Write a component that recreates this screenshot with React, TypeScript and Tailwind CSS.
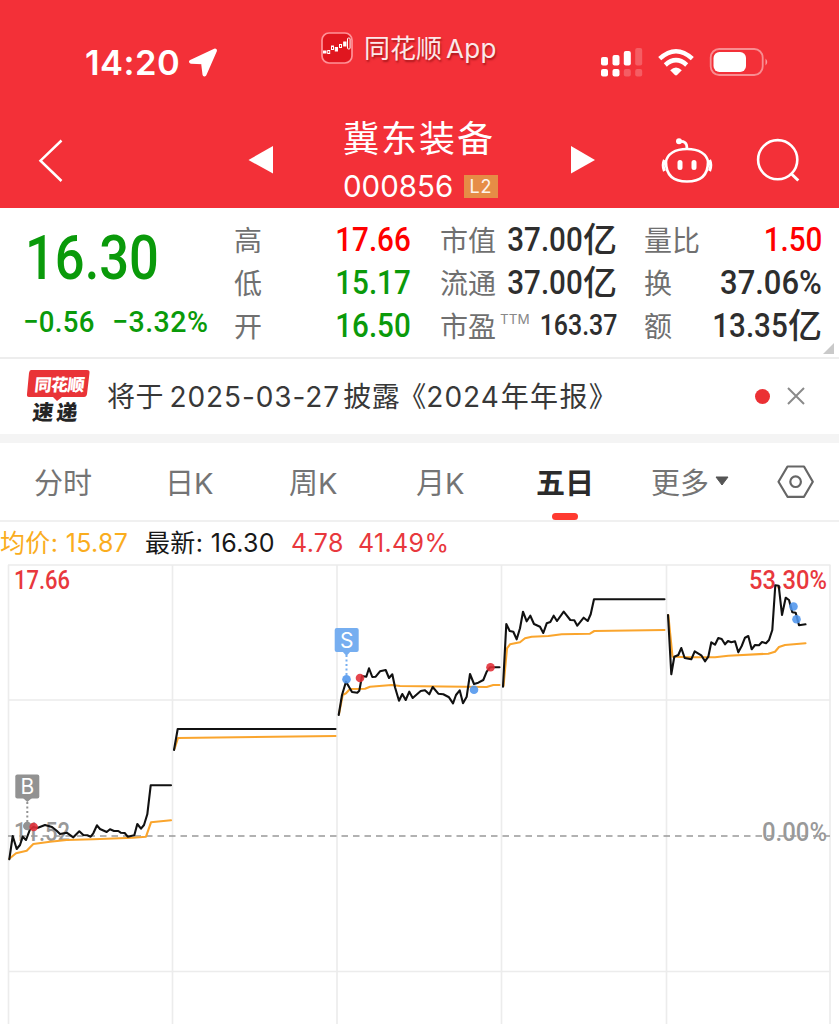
import React from 'react';

const sans = "font-['Inter','Noto_Sans_CJK_SC',sans-serif]";
const din = "font-['Roboto','Noto_Sans_CJK_SC',sans-serif] font-medium";

const quoteColumns = [
  {
    width: 'w-[177px]',
    margin: '',
    rows: [
      { label: '高', value: '17.66', unit: '', color: 'text-[#ff0000]' },
      { label: '低', value: '15.17', unit: '', color: 'text-[#0a9a0a]' },
      { label: '开', value: '16.50', unit: '', color: 'text-[#0a9a0a]' }
    ]
  },
  {
    width: 'w-[177px]',
    margin: 'ml-[29px]',
    rows: [
      { label: '市值', value: '37.00', unit: '亿', color: 'text-[#2e2e2e]' },
      { label: '流通', value: '37.00', unit: '亿', color: 'text-[#2e2e2e]' },
      { label: '市盈', value: '163.37', unit: '', color: 'text-[#2e2e2e]', sup: 'TTM' }
    ]
  },
  {
    width: 'w-[178px]',
    margin: 'ml-[27px]',
    rows: [
      { label: '量比', value: '1.50', unit: '', color: 'text-[#ff0000]' },
      { label: '换', value: '37.06%', unit: '', color: 'text-[#2e2e2e]', wide: true },
      { label: '额', value: '13.35', unit: '亿', color: 'text-[#2e2e2e]' }
    ]
  }
];

const tabs = [
  { label: '分时', margin: 'ml-[34px]', width: 'w-[60px]' },
  { label: '日K', margin: 'ml-[71px]', width: 'w-[50px]' },
  { label: '周K', margin: 'ml-[74px]', width: 'w-[50px]' },
  { label: '月K', margin: 'ml-[77px]', width: 'w-[50px]' },
  { label: '五日', margin: 'ml-[70px]', width: 'w-[58px]', active: true },
  { label: '更多', margin: 'ml-[57px]', width: 'w-[60px]' }
];

const priceLines = [
  '9.3,859.3 12.7,836 16.7,849 20,845 22.7,836.7 26,840 30,829.3 33.3,827 37.3,828 45,825 52,827 56.7,830.7 60,834 66.7,832.7 73.3,837.3 79.3,831.3 83.3,835 87.3,835.3 90.7,836.7 93.3,833.3 97,825.3 100,829 106.7,832 110,829.3 114,831 118.3,831 120.7,832.7 124.7,833 127.7,836.7 134.3,835.3 137.3,824 141,828.7 144,825 147.3,814.3 150.7,785.3 171,785.3',
  '174,750 177.7,729 335.5,729',
  '338.7,715 342,695 346,681.7 352,692 357.3,692.7 359.3,690.7 362,676 366.3,676.7 369,668.3 372.3,677 375.7,676.7 380,671.3 385.7,670 389,678 392.3,674.3 395,687.3 399,700.7 402.3,694 405.7,700 409.3,691.7 412.7,698 420.7,691 425,690.3 429.3,694.3 432.7,687 438.3,693.7 443.3,694.3 449,697.3 453,703.3 456,695 459.7,690.3 463,703.3 466.7,696.7 470,674 474,684 478.3,682.7 483.3,680 486.7,671.7 490,667.3 499.5,667.3',
  '503,686.7 506.3,624 509.7,631 513.3,631.7 516.7,639.3 520,628.3 523,611.7 526.7,621.3 530.3,615.7 534,624 540,626.7 543.3,633 546.7,623.3 550.3,622 553.7,615.7 557,621 563.7,611.7 570.3,620 574.3,620.3 577.3,625.7 583.7,617.7 587.7,621 590.7,614.3 594,599.3 664.5,599.3',
  '668,615 671.3,674.3 674.3,656.7 678.3,655 681.3,648 684.7,658 691.3,659.3 694.7,651.3 701.3,655.3 705,661.3 708.3,656.7 711.3,642.3 715,644.7 718.3,638 721.7,639 725,644.3 728,641 731.3,642.3 735,641.3 738.3,652.3 741.7,646 745,637.7 748.3,636 751.7,649.3 755,645 759,645.3 762,642 766,643.3 769,640 772.3,630 775.3,585.3 778.7,585.7 782,615 785.7,597.7 789,600 792.3,612.3 795.7,612.7 799,625.3 805.5,624.3'
];

const averageLines = [
  '9.3,858.7 16,853.3 26.7,850.7 33.3,844 50,841.7 66.7,840 93.3,839.3 133,837.7 146,836.7 151,822.3 171,820.3',
  '174.5,749 178,738 335.5,736',
  '339,714 342.7,695 346,693.3 350,689 365,688.7 370,686.7 391.7,685 400,686 486.7,687 493.3,685 499.5,685',
  '503.5,686 507,648.3 510,644.3 520,642.3 525,638.3 531.7,636.7 548.3,636 561.7,634.3 590,633.7 594.3,631 664.5,630',
  '668.3,615 672.5,656.7 675,656.7 688.3,657.3 715,657.3 728.3,655.7 768.3,653.7 775,651.7 779,647 785,645 805.5,643.3'
];

const StatusBar: React.FC = () => (
  <div className="flex h-[97px] items-start text-white">
    <div className="ml-[85px] mt-[42px] flex items-center">
      <span className="w-[97px] whitespace-nowrap text-[34.5px] font-semibold leading-[42px] tracking-[0.5px]">14:20</span>
      <svg className="ml-[6px]" width="30" height="30" viewBox="0 0 30 30">
        <path d="M27 2.500 3 13.700 15 14.300 16.500 26.500Z" fill="white" stroke="white" strokeWidth="4" strokeLinejoin="round" />
      </svg>
    </div>
    <div className="ml-[103px] mt-[32px] flex h-8 items-center">
      <svg width="32" height="32" viewBox="0 0 32 32">
        <rect x="1" y="1" width="30" height="30" rx="7" fill="#e0161f" stroke="#ff9298" strokeWidth="1.7" />
        <g fill="white" stroke="white" strokeWidth="1">
          <rect x="2.5" y="19" width="2.5" height="2" />
          <rect x="6.7" y="18.5" width="2" height="3" fill="none" />
          <rect x="10.5" y="14" width="2" height="3.5" fill="none" />
          <rect x="14.3" y="15.5" width="2.2" height="3.5" />
          <rect x="18.5" y="12.5" width="2" height="3" fill="none" />
          <rect x="22.7" y="10" width="2.3" height="4" />
          <rect x="26.5" y="6" width="2.6" height="11" rx="1" fill="none" />
        </g>
      </svg>
      <span className="relative top-px ml-[11px] w-[133px] whitespace-nowrap text-[26px] leading-8 text-white/90 [text-shadow:1px_2px_2px_rgba(100,0,0,0.5)]">
        同花顺<span className="ml-[4px] tracking-[0.3px]">App</span>
      </span>
    </div>
    <svg className="ml-[100px] mt-[42px]" width="172" height="40" viewBox="597.5 42 172 40">
      <g fill="white">
        <rect x="601.5" y="57" width="7" height="8.5" rx="2" />
        <rect x="613" y="55" width="7" height="10.5" rx="2" />
        <rect x="624.3" y="51" width="7" height="14.5" rx="2" />
        <rect x="635.7" y="48" width="7" height="17.5" rx="2" opacity=".22" />
        <rect x="601.5" y="69" width="7" height="7.5" rx="2" />
        <rect x="613" y="69" width="7" height="7.5" rx="2" />
        <rect x="624.3" y="69" width="7" height="7.5" rx="2" opacity=".22" />
        <rect x="635.7" y="69" width="7" height="7.5" rx="2" opacity=".22" />
      </g>
      <g fill="none" stroke="white" strokeWidth="4.5">
        <path d="M660.2 58.7Q676.5 43.8 692.8 58.7" />
        <path d="M665.8 65Q676.5 55.4 687.2 65" />
      </g>
      <path d="M670.7 70.2Q676.5 65 682.3 70.2L677.6 75Q676.5 75.8 675.4 75Z" fill="white" />
      <rect x="711.2" y="49" width="52" height="26" rx="8.5" fill="none" stroke="white" strokeOpacity=".45" strokeWidth="1.8" />
      <rect x="714" y="52" width="32.5" height="20" rx="6" fill="white" />
      <path d="M766 58.5Q769.5 62 766 65.5Z" fill="white" opacity=".5" />
    </svg>
  </div>
);

const TitleBar: React.FC = () => (
  <div className="flex h-[111px] items-start text-white">
    <svg className="ml-[36px] mt-[40px]" width="30" height="48" viewBox="36 137 30 48">
      <path d="M61.5 140.5 40.5 160.7 61.5 181" fill="none" stroke="white" strokeWidth="2.5" />
    </svg>
    <svg className="ml-[181px] mt-[46px]" width="28" height="34" viewBox="247 143 28 34">
      <path d="M248.5 160 273 146V173.5Z" fill="white" />
    </svg>
    <div className="ml-[68px] mt-[19px] w-[157px]">
      <div className="whitespace-nowrap text-[36px] leading-[46px] tracking-[2px]">冀东装备</div>
      <div className="mt-[6px] flex items-center leading-[36px]">
        <span className="w-[121px] text-[29.5px]">000856</span>
        <span className="flex h-[23px] w-[34px] items-center justify-center bg-[#e68c46] text-[18px] leading-[23px] tracking-[1px] text-white/90">L2</span>
      </div>
    </div>
    <svg className="ml-[69px] mt-[46px]" width="28" height="34" viewBox="569 143 28 34">
      <path d="M571 146 595 160 571 173.5Z" fill="white" />
    </svg>
    <svg className="ml-[63px] mt-[37px]" width="54" height="54" viewBox="660 134 54 54" fill="none" stroke="white" strokeWidth="2.6">
      <path d="M687 149C699 149 707 154 708 162C708 176 700 181.500 687 181.500S666 176 666 162C667 154 675 149 687 149Z" />
      <path d="M679 141.5C684 141 687.5 142.5 686.8 149" />
      <circle cx="679" cy="141.3" r="3" fill="white" stroke="none" />
      <path d="M664.500 160Q662 165.500 664.500 171M709.500 160Q712 165.500 709.500 171" strokeWidth="3.2" />
      <path d="M680 162.500V167.500M694 162.500V167.500" strokeWidth="5" strokeLinecap="round" />
    </svg>
    <svg className="ml-[42px] mt-[39px]" width="48" height="50" viewBox="756 136 48 50" fill="none" stroke="white" strokeWidth="2.6">
      <circle cx="777.7" cy="159.7" r="19.6" />
      <path d="M790.5 173 798.3 180.5" strokeWidth="3" />
    </svg>
  </div>
);

const Quote: React.FC = () => (
  <section className="relative flex h-[151px] border-b-2 border-[#ededed]">
    <div className={`w-[234px] shrink-0 text-[#0a9a0a] ${din}`}>
      <div className="ml-[25px] mt-[14px] origin-left scale-x-[0.86] whitespace-nowrap text-[61px] leading-[72px]">16.30</div>
      <div className="ml-[23px] mt-[8px] flex whitespace-nowrap text-[30px] leading-[40px]">
        <span className="w-[89px] origin-left scale-x-[0.92] tracking-[0.3px]">−0.56</span>
        <span className="w-[110px] origin-left scale-x-[0.95] tracking-[0.5px]">−3.32%</span>
      </div>
    </div>
    {quoteColumns.map((column, index) => (
      <div key={index} className={`mt-[10px] shrink-0 ${column.width} ${column.margin}`}>
        {column.rows.map((row) => (
          <div key={row.label} className="flex h-[43px] items-center whitespace-nowrap">
            <span className="relative top-px text-[28px] text-[#707070]">{row.label}</span>
            {row.sup && <sup className="ml-[4px] w-[25px] text-[13.5px] text-[#888]">{row.sup}</sup>}
            <span className={`ml-auto flex items-center ${din} ${row.color}`}>
              <span className={row.sup ? '-ml-4 origin-right scale-x-[0.86] text-[29px]' : row.wide ? 'origin-right scale-x-[0.91] text-[34px]' : 'origin-right scale-x-[0.87] text-[34px]'}>{row.value}</span>
              {row.unit && <span className="relative top-px text-[34px] leading-[43px]">{row.unit}</span>}
            </span>
          </div>
        ))}
      </div>
    ))}
    <svg className="absolute right-[5px] bottom-[3px]" width="11" height="11">
      <path d="M11 0V11H0Z" fill="#c9c9c9" />
    </svg>
  </section>
);

const Notice: React.FC = () => (
  <section className="flex h-[75px] items-start">
    <div className="relative ml-[26px] mt-[11px] h-[54px] w-[64px]">
      <svg className="absolute inset-0" width="64" height="54">
        <path d="M5 0H61Q64 0 63.5 3L61 24Q60.5 27 58 27H36L31 31 27 27H3Q0.5 27 1 24L3 3Q3.5 0 5 0Z" fill="#e93337" />
      </svg>
      <div className="relative -skew-x-6 text-center font-['Noto_Sans_CJK_SC',sans-serif] font-black">
        <div className="whitespace-nowrap text-[17px] leading-[27px] tracking-[-0.5px] text-white">同花顺</div>
        <div className="whitespace-nowrap text-[21px] leading-[28px] tracking-[3px] text-[#242424]">速递</div>
      </div>
    </div>
    <div className="ml-[17px] mt-[18px] flex w-[511px] whitespace-nowrap text-[28px] leading-[40px] text-[#383838]">
      <span className="w-[63px] tracking-[0.5px]">将于</span>
      <span className="w-[175px] tracking-[0.9px]">2025-03-27</span>
      <span className="tracking-[0.5px]">披露</span>
      <span className="-ml-[2px]">《</span>
      <span className="w-[75px] tracking-[1px]">2024</span>
      <span className="tracking-[1.3px]">年年报》</span>
    </div>
    <div className="ml-[137px] mt-[30px] h-[15px] w-[15px] rounded-full bg-[#eb3034]"></div>
    <svg className="ml-[16px] mt-[28px]" width="20" height="20" viewBox="0 0 20 20">
      <path d="M2 1 18 17M18 1 2 17" stroke="#8a8a8a" strokeWidth="2" />
    </svg>
  </section>
);

const Tabs: React.FC = () => (
  <nav className="flex h-[79px] items-start border-b-2 border-[#f0f0f0] text-[29px] text-[#747474]">
    {tabs.map((tab) => (
      <div key={tab.label} className={`mt-[19px] shrink-0 whitespace-nowrap ${tab.margin} ${tab.width}`}>
        <div className={tab.active ? 'font-bold leading-[44px] text-[#2b2b2b]' : 'leading-[44px]'}>{tab.label}</div>
        {tab.active && <div className="mx-auto mt-[7px] h-[7px] w-[26px] rounded-full bg-[#ff3a30]"></div>}
      </div>
    ))}
    <svg className="ml-[4px] mt-[33px]" width="14" height="12">
      <path d="M1 1H13L7 9Z" fill="#555" stroke="#555" strokeLinejoin="round" />
    </svg>
    <svg className="ml-[46px] mt-[19px]" width="42" height="40" viewBox="775 462 42 40" fill="none" stroke="#666" strokeWidth="2.2" strokeLinejoin="round">
      <path d="M787.5 466.5H804L812.8 481.7 804 496.8H787.5L778.5 481.7Z" />
      <circle cx="795.6" cy="481.7" r="5.3" />
    </svg>
  </nav>
);

const Chart: React.FC = () => (
  <svg className="block" width="839" height="460" viewBox="0 564 839 460">
    <g stroke="#ececec" strokeWidth="1.6" fill="none">
      <path d="M8 565H830.5M8 700H830.5M8 971.5H830.5" />
      <path d="M8.5 565V1024M172.5 565V1024M337 565V1024M501.5 565V1024M666.5 565V1024M830 565V1024" />
    </g>
    <path d="M8 836H830" stroke="#999" strokeWidth="1.5" strokeDasharray="6.5 5" />
    <g className={din} fontSize="25">
      <text x="14" y="589" fill="#e8383d" textLength="56" lengthAdjust="spacingAndGlyphs">17.66</text>
      <text x="749" y="589" fill="#e8383d" textLength="78" lengthAdjust="spacingAndGlyphs">53.30%</text>
      <text x="14" y="841" fill="#999" textLength="56" lengthAdjust="spacingAndGlyphs">11.52</text>
      <text x="762" y="841" fill="#999" textLength="65" lengthAdjust="spacingAndGlyphs">0.00%</text>
    </g>
    <g fill="none" strokeWidth="2.1" strokeLinejoin="round" strokeLinecap="round">
      {averageLines.map((points) => (
        <polyline key={points} points={points} stroke="#faa52d" />
      ))}
      {priceLines.map((points) => (
        <polyline key={points} points={points} stroke="#111" />
      ))}
    </g>
    {/* Buy and sell markers */}
    <g fill="#929292">
      <rect x="15.3" y="774.5" width="24" height="24" rx="2" />
      <path d="M23 798H32L27.3 802Z" />
      <path d="M27.3 802V823" stroke="#929292" strokeWidth="2" strokeDasharray="2 2.5" />
      <circle cx="27.3" cy="826" r="4.3" />
    </g>
    <g fill="#76aef0">
      <rect x="334.7" y="628" width="24" height="24" rx="2" />
      <path d="M342 651H351L346.5 656Z" />
      <path d="M346.5 655V677" stroke="#76aef0" strokeWidth="2" strokeDasharray="2 2.5" />
    </g>
    <g className={sans} fill="white" fontSize="21" textAnchor="middle">
      <text x="27.3" y="794">B</text>
      <text x="346.7" y="648">S</text>
    </g>
    <g fill="#e12c35" fillOpacity=".88">
      <circle cx="33.7" cy="827" r="4.3" />
      <circle cx="360" cy="678" r="4.3" />
      <circle cx="490.5" cy="667.3" r="4.3" />
    </g>
    <g fill="#4f95ed" fillOpacity=".88">
      <circle cx="346.5" cy="679.3" r="4.3" />
      <circle cx="474" cy="689.7" r="4.3" />
      <circle cx="793.5" cy="606.5" r="4.3" />
      <circle cx="796.5" cy="619.3" r="4.3" />
    </g>
  </svg>
);

const App: React.FC = () => {
  return (
    <main className={`h-[1024px] w-[839px] overflow-hidden bg-white ${sans}`}>
      <header className="h-[208px] bg-[#f33038]">
        <StatusBar />
        <TitleBar />
      </header>
      <Quote />
      <Notice />
      <div className="h-[9px] bg-[#f4f4f4]"></div>
      <Tabs />
      <div className="flex h-[42px] whitespace-nowrap text-[25px] leading-[43px] tracking-[0.35px]">
        <span className="w-[145px] text-[#faad1e]">均价: 15.87</span>
        <span className="w-[146px] text-[#181818]">最新: 16.30</span>
        <span className="w-[67px] text-[#e8383d]">4.78</span>
        <span className="text-[#e8383d]">41.49%</span>
      </div>
      <Chart />
    </main>
  );
};

export default App;
